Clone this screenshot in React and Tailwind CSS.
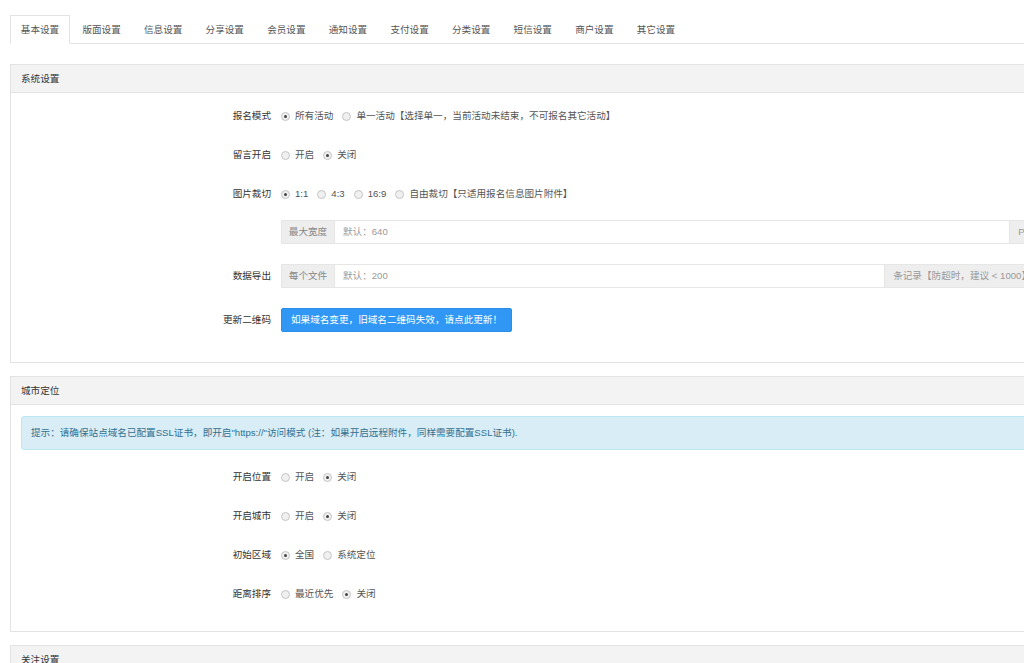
import React from "react";

const tabs = ["基本设置","版面设置","信息设置","分享设置","会员设置","通知设置","支付设置","分类设置","短信设置","商户设置","其它设置"];

function Radio({ checked, label }) {
  return (
    <span className="flex items-center mr-[9px]">
      <span className="relative w-[9px] h-[9px] rounded-full border border-[#c4c4c4] bg-[#f0f0f0] flex items-center justify-center">
        {checked && <span className="w-[3px] h-[3px] rounded-full bg-[#444]" />}
      </span>
      <span className="ml-[5px] text-[#555]">{label}</span>
    </span>
  );
}

function Row({ label, children, className = "" }) {
  return (
    <div className={"flex items-center " + className}>
      <div className="w-[260px] shrink-0 pr-[10px] text-right text-[#333]">{label}</div>
      <div className="flex items-center">{children}</div>
    </div>
  );
}

function RadioRow({ label, options, checked, className }) {
  return (
    <Row label={label} className={"h-[22px] " + className}>
      {options.map((o, i) => (
        <Radio key={i} label={o} checked={i === checked} />
      ))}
    </Row>
  );
}

function InputGroup({ left, placeholder, right }) {
  return (
    <div className="flex w-[764px] h-[24px]">
      <span className="w-[53px] shrink-0 flex items-center justify-center bg-[#eeeeee] border border-[#e6e6e6] border-r-0 text-[#888]">{left}</span>
      <span className="flex-1 flex items-center pl-[8px] border border-[#e6e6e6] bg-white text-[#999]">{placeholder}</span>
      <span className="shrink-0 flex items-center pl-[8px] pr-[13px] bg-[#eeeeee] border border-[#e6e6e6] border-l-0 text-[#999] whitespace-nowrap">{right}</span>
    </div>
  );
}

function Panel({ title, children, className = "" }) {
  return (
    <div className={"border border-[#e3e3e3] bg-white " + className}>
      <div className="h-[28px] flex items-center px-[10px] bg-[#f3f3f3] border-b border-[#e3e3e3] text-[#333]">{title}</div>
      {children}
    </div>
  );
}

export default function App() {
  return (
    <div className="w-screen h-screen overflow-hidden bg-white font-['Liberation_Sans','Noto_Sans_CJK_SC',sans-serif] text-[9.6px] leading-none">
      <div className="w-[1100px] pl-[10px] pt-[15px]">
        <div className="flex border-b border-[#e3e3e3] h-[29px]">
          {tabs.map((t, i) => (
            <div
              key={t}
              className={
                "w-[60px] mr-[1.6px] h-[29px] flex items-center justify-center text-[#555] " +
                (i === 0 ? "border border-[#e3e3e3] border-b-white bg-white -mb-px h-[29px]" : "")
              }
            >
              {t}
            </div>
          ))}
        </div>

        <Panel title="系统设置" className="mt-[20px] w-[1080px]">
          <div className="px-[10px] pt-[12px] pb-[30px]">
            <RadioRow label="报名模式" options={["所有活动", "单一活动【选择单一，当前活动未结束，不可报名其它活动】"]} checked={0} />
            <RadioRow label="留言开启" options={["开启", "关闭"]} checked={1} className="mt-[17px]" />
            <RadioRow label="图片裁切" options={["1:1", "4:3", "16:9", "自由裁切【只适用报名信息图片附件】"]} checked={0} className="mt-[17px]" />
            <Row label="" className="mt-[15px] h-[24px]">
              <InputGroup left="最大宽度" placeholder="默认：640" right="PX" />
            </Row>
            <Row label="数据导出" className="mt-[20px] h-[24px]">
              <InputGroup left="每个文件" placeholder="默认：200" right="条记录【防超时，建议 < 1000】" />
            </Row>
            <Row label="更新二维码" className="mt-[20px] h-[24px]">
              <button className="h-[24px] px-[9px] bg-[#3097f5] border border-[#2b8ee8] rounded-[2px] text-white text-[9.6px] leading-none">
                如果域名变更，旧域名二维码失效，请点此更新！
              </button>
            </Row>
          </div>
        </Panel>

        <Panel title="城市定位" className="mt-[13px] w-[1080px]">
          <div className="px-[10px] pt-[11px] pb-[26px]">
            <div className="h-[34px] flex items-center px-[9px] bg-[#d9edf7] border border-[#bce8f1] rounded-[3px] text-[#31708f]">
              提示：请确保站点域名已配置SSL证书，即开启"https://"访问模式 (注：如果开启远程附件，同样需要配置SSL证书).
            </div>
            <RadioRow label="开启位置" options={["开启", "关闭"]} checked={1} className="mt-[16px]" />
            <RadioRow label="开启城市" options={["开启", "关闭"]} checked={1} className="mt-[17px]" />
            <RadioRow label="初始区域" options={["全国", "系统定位"]} checked={0} className="mt-[17px]" />
            <RadioRow label="距离排序" options={["最近优先", "关闭"]} checked={1} className="mt-[17px]" />
          </div>
        </Panel>

        <Panel title="关注设置" className="mt-[13px] w-[1080px]">
          <div className="h-[100px]" />
        </Panel>
      </div>
    </div>
  );
}
